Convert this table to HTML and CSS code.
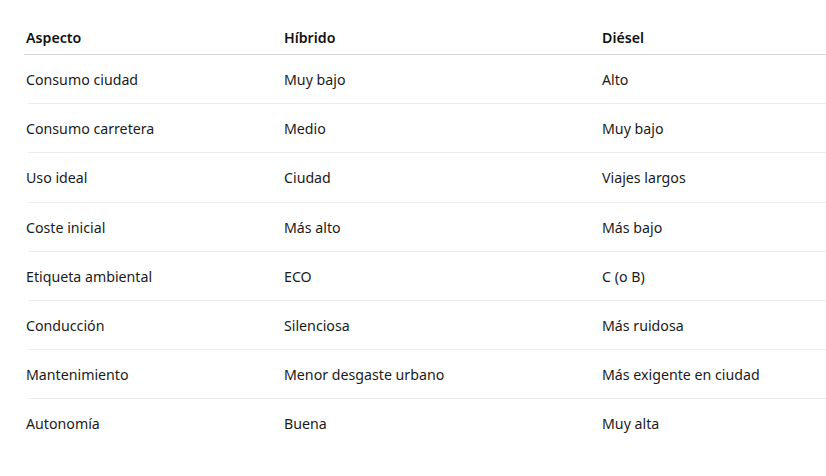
FILE: index.html
```html
<!DOCTYPE html>
<html lang="es">
<head>
<meta charset="utf-8">
<title>Híbrido vs Diésel</title>
<link rel="stylesheet" href="styles.css">
</head>
<body>
<div class="table">
  <div class="row head">
    <div class="cell">Aspecto</div>
    <div class="cell">Híbrido</div>
    <div class="cell">Diésel</div>
  </div>
  <div class="row">
    <div class="cell">Consumo ciudad</div>
    <div class="cell">Muy bajo</div>
    <div class="cell">Alto</div>
  </div>
  <div class="row">
    <div class="cell">Consumo carretera</div>
    <div class="cell">Medio</div>
    <div class="cell">Muy bajo</div>
  </div>
  <div class="row">
    <div class="cell">Uso ideal</div>
    <div class="cell">Ciudad</div>
    <div class="cell">Viajes largos</div>
  </div>
  <div class="row">
    <div class="cell">Coste inicial</div>
    <div class="cell">Más alto</div>
    <div class="cell">Más bajo</div>
  </div>
  <div class="row">
    <div class="cell">Etiqueta ambiental</div>
    <div class="cell">ECO</div>
    <div class="cell">C (o B)</div>
  </div>
  <div class="row">
    <div class="cell">Conducción</div>
    <div class="cell">Silenciosa</div>
    <div class="cell">Más ruidosa</div>
  </div>
  <div class="row">
    <div class="cell">Mantenimiento</div>
    <div class="cell">Menor desgaste urbano</div>
    <div class="cell">Más exigente en ciudad</div>
  </div>
  <div class="row last">
    <div class="cell">Autonomía</div>
    <div class="cell">Buena</div>
    <div class="cell">Muy alta</div>
  </div>
</div>
</body>
</html>
```

FILE: styles.css
```css
html, body {
  margin: 0;
  padding: 0;
  background: #ffffff;
}
body {
  font-family: "Noto Sans", "Open Sans", sans-serif;
  font-size: 14.2px;
  color: #1b1b1b;
}
.table {
  margin: 19px 0 0 24px;
  display: flex;
  flex-direction: column;
}
.row {
  display: grid;
  grid-template-columns: 258px 318px 1fr;
  background: linear-gradient(#ececec, #ececec) no-repeat 4px 100% / calc(100% - 4px) 1px;
  padding-bottom: 1px;
}
.row.last {
  background: none;
}
.cell {
  padding: 15.1px 0 13.1px 2px;
  line-height: 20px;
  white-space: nowrap;
}
.head {
  background: none;
  border-bottom: 1px solid #d4d4d4;
  padding-bottom: 0;
  font-weight: 600;
  color: #111;
}
.head .cell {
  padding: 9px 0 6px 2px;
}
```
